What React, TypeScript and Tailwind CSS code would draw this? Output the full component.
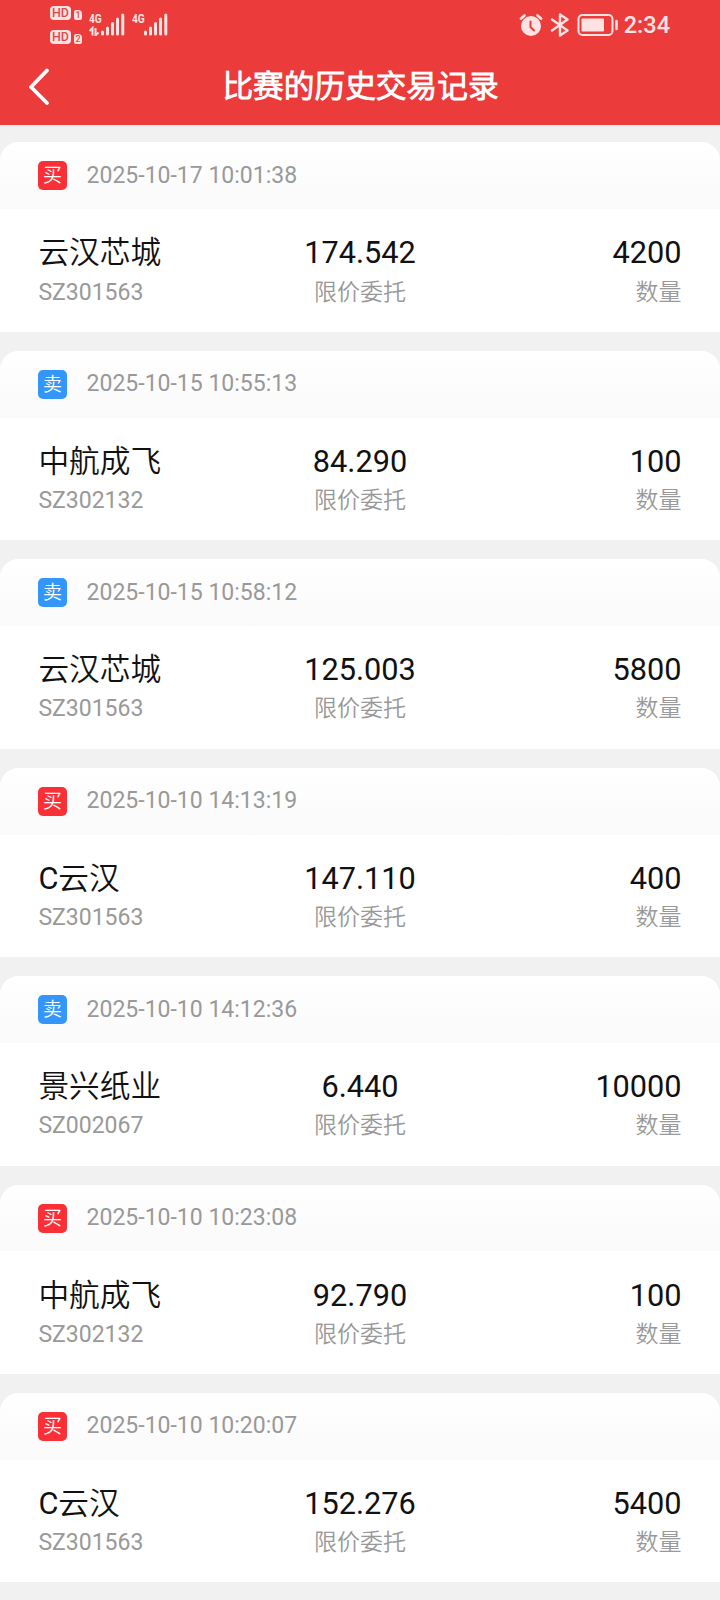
interface Trade {
  side: "buy" | "sell"
  time: string
  name: string
  code: string
  price: string
  amount: string
}

const trades: Trade[] = [
  { side: "buy", time: "2025-10-17 10:01:38", name: "云汉芯城", code: "SZ301563", price: "174.542", amount: "4200" },
  { side: "sell", time: "2025-10-15 10:55:13", name: "中航成飞", code: "SZ302132", price: "84.290", amount: "100" },
  { side: "sell", time: "2025-10-15 10:58:12", name: "云汉芯城", code: "SZ301563", price: "125.003", amount: "5800" },
  { side: "buy", time: "2025-10-10 14:13:19", name: "C云汉", code: "SZ301563", price: "147.110", amount: "400" },
  { side: "sell", time: "2025-10-10 14:12:36", name: "景兴纸业", code: "SZ002067", price: "6.440", amount: "10000" },
  { side: "buy", time: "2025-10-10 10:23:08", name: "中航成飞", code: "SZ302132", price: "92.790", amount: "100" },
  { side: "buy", time: "2025-10-10 10:20:07", name: "C云汉", code: "SZ301563", price: "152.276", amount: "5400" },
]

function HdBadge({ sim }: { sim: string }) {
  return (
    <div className="flex h-[14px] items-end gap-[3px] text-[#e24a4a]">
      <span className="flex h-[14px] w-[21px] items-center justify-center rounded-[4px] bg-[#ffe3e3] text-[12.5px] leading-none font-medium">
        HD
      </span>
      <span className="flex h-[10px] w-[8px] items-center justify-center rounded-[2px] rounded-tr-[4px] bg-[#ffe3e3] text-[9px] leading-none font-medium">
        {sim}
      </span>
    </div>
  )
}

function Signal({ data }: { data?: boolean }) {
  return (
    <div className="relative h-[23px] w-[36px]">
      <span className="absolute top-0 left-0 origin-left scale-x-[0.75] text-[13.5px] leading-[11px] font-bold">4G</span>
      <svg className="absolute inset-0" width="36" height="23" viewBox="0 0 36 23" fill="none" stroke="currentColor">
        {data && <path d="M0.5 18 3.500 15v7.500M6.500 15v7.500L9.500 19.500" strokeWidth="2" />}
        <path d="M13.500 21v-2M18.500 21v-6M23.500 21v-10.500M28.500 21V6M33.800 21V2" strokeWidth="3" strokeLinecap="round" />
      </svg>
    </div>
  )
}

function StatusBar() {
  return (
    <div className="flex h-[48px] justify-between pr-[50px] pl-[50px] text-[#ffe3e3]">
      <div className="flex">
        <div className="flex flex-col gap-[10px] pt-[6px]">
          <HdBadge sim="1" />
          <HdBadge sim="2" />
        </div>
        <div className="flex gap-[7px] pt-[13px] pl-[7px]">
          <Signal data />
          <Signal />
        </div>
      </div>
      <div className="flex h-[49px] items-center">
        <svg width="24" height="24" viewBox="0 0 24 24" fill="none" stroke="currentColor">
          <circle cx="12" cy="13" r="10" fill="currentColor" stroke="none" />
          <path d="M2 5.500 5.500 2.500M22 5.500 18.500 2.500" strokeWidth="2.800" strokeLinecap="round" />
          <path d="M11.500 8.500v5.500l3.500 3.500" stroke="#eb3b3b" strokeWidth="2" strokeLinecap="round" />
        </svg>
        <svg className="ml-[7px]" width="20" height="24" viewBox="0 0 20 24" fill="none" stroke="currentColor" strokeWidth="2.400" strokeLinejoin="round" strokeLinecap="round">
          <path d="M2 6.500 17.500 17.500 10 22.500V1.500L17.500 6.500 2 17.500" />
        </svg>
        <svg className="ml-[7px]" width="42" height="24" viewBox="0 0 42 24" fill="none">
          <rect x="1.500" y="2" width="34" height="20" rx="4" stroke="currentColor" strokeWidth="2" />
          <rect x="4.500" y="5.500" width="22.500" height="13" rx="1" fill="currentColor" />
          <path d="M39.500 8v8" stroke="currentColor" strokeWidth="2.500" strokeLinecap="round" />
        </svg>
        <span className="ml-[5px] pt-[3px] text-[23.5px] leading-none font-medium">2:34</span>
      </div>
    </div>
  )
}

function PageHeader({ title }: { title: string }) {
  return (
    <header className="relative flex h-[77px] items-center justify-center">
      <svg className="absolute top-[19px] left-[28px]" width="22" height="38" viewBox="0 0 22 38" fill="none" stroke="white" strokeWidth="3.800" strokeLinecap="round" strokeLinejoin="round">
        <path d="M19 3.500 3 20 19 36" />
      </svg>
      <h1 className="pl-px text-[30.7px] leading-[44px] font-bold text-white">{title}</h1>
    </header>
  )
}

function TradeCard({ trade }: { trade: Trade }) {
  return (
    <div className="h-[189.4px] overflow-hidden rounded-t-[19px] bg-white">
      <div className="flex h-[66.8px] items-center bg-linear-to-b from-white to-[#fafafa] px-[38px]">
        <span
          className={`flex h-[29px] w-[29px] items-center justify-center rounded-[5px] text-[19px] leading-none text-white ${
            trade.side === "buy" ? "bg-[#fb2f36]" : "bg-[#3296fa]"
          }`}
        >
          {trade.side === "buy" ? "买" : "卖"}
        </span>
        <span className="ml-[19.6px] text-[23px] leading-[36px] text-[#999]">{trade.time}</span>
      </div>
      <div className="grid grid-cols-3 px-[38.4px] pt-[24.2px] text-[30.7px] leading-[40px] text-[#111]">
        <div>{trade.name}</div>
        <div className="text-center">{trade.price}</div>
        <div className="text-right">{trade.amount}</div>
      </div>
      <div className="grid grid-cols-3 px-[38.4px] pt-[0.2px] text-[23px] leading-[37px] text-[#999]">
        <div>{trade.code}</div>
        <div className="text-center">限价委托</div>
        <div className="text-right">数量</div>
      </div>
    </div>
  )
}

export default function App() {
  return (
    <div className="h-[1600px] w-[720px] overflow-hidden bg-[#f1f1f1] font-[Roboto,'Noto_Sans_CJK_SC_DemiLight','Noto_Sans_CJK_SC',sans-serif]">
      <div className="h-[125px] bg-[#eb3b3b]">
        <StatusBar />
        <PageHeader title="比赛的历史交易记录" />
      </div>
      <div className="flex flex-col gap-[19.05px] pt-[17.45px]">
        {trades.map((trade) => (
          <TradeCard key={trade.time} trade={trade} />
        ))}
      </div>
    </div>
  )
}
